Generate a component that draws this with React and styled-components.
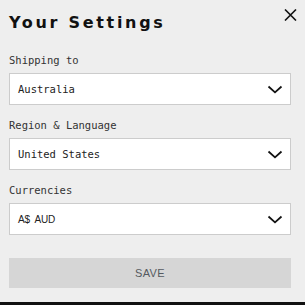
import React from "react";
import styled, { createGlobalStyle } from "styled-components";

const Global = createGlobalStyle`
  html, body { margin: 0; padding: 0; background: #eeeeee; }
  body { font-family: "DejaVu Sans Mono", monospace; }
  *, *::before, *::after { box-sizing: border-box; }
`;

const Panel = styled.div`
  position: relative;
  background: #eeeeee;
  padding: 0 14px 0 9px;
  width: 305px;
`;

const Header = styled.div`
  height: 53px;
  display: flex;
  align-items: flex-start;
`;

const Title = styled.h1`
  margin: 12px 0 0 0;
  font-family: "DejaVu Sans", sans-serif;
  font-weight: 700;
  font-size: 16px;
  line-height: 22px;
  letter-spacing: 2.7px;
  color: #111111;
`;

const Close = styled.button`
  position: absolute;
  top: 8px;
  right: 8px;
  width: 14px;
  height: 14px;
  padding: 0;
  border: 0;
  background: transparent;
  display: flex;
  align-items: center;
  justify-content: center;
`;

const Field = styled.div`
  display: flex;
  flex-direction: column;
  margin-bottom: ${(p) => p.$gap}px;
`;

const Label = styled.div`
  font-family: "DejaVu Sans Mono", monospace;
  font-size: 10.5px;
  line-height: 14px;
  color: #333333;
  margin-bottom: 6px;
`;

const Select = styled.div`
  height: 32px;
  border: 1px solid #cccccc;
  background: #ffffff;
  display: flex;
  align-items: center;
  justify-content: space-between;
  padding: 0 7px 0 8px;
`;

const Value = styled.span`
  font-family: ${(p) =>
    p.$sans ? '"Liberation Sans", Arial, sans-serif' : '"DejaVu Sans Mono", monospace'};
  font-size: ${(p) => (p.$sans ? "10px" : "10.5px")};
  color: #222222;
  letter-spacing: ${(p) => (p.$sans ? "-0.2px" : "0")};
  white-space: pre;
`;

const SaveButton = styled.button`
  display: block;
  width: 282px;
  height: 30px;
  border: 0;
  background: #d6d6d6;
  font-family: "Liberation Sans", Arial, sans-serif;
  font-size: 11px;
  letter-spacing: 0.4px;
  color: #555a60;
  padding: 0;
  margin: 0;
`;

const Footer = styled.div`
  margin-top: 14px;
  height: 10px;
  background: #111111;
`;

const Chevron = () => (
  <svg width="16" height="9" viewBox="0 0 16 9">
    <path d="M1.5 1.5 L8 7.3 L14.5 1.5" fill="none" stroke="#111" strokeWidth="1.8" />
  </svg>
);

const fields = [
  { label: "Shipping to", value: "Australia" },
  { label: "Region & Language", value: "United States" },
  { label: "Currencies", value: "A$  AUD", sans: true },
];

export default function App() {
  return (
    <>
      <Global />
      <Panel>
        <Header>
          <Title>Your Settings</Title>
          <Close aria-label="Close">
            <svg width="13" height="12" viewBox="0 0 13 12">
              <path d="M1 0.5 L12 11.5 M12 0.5 L1 11.5" stroke="#111" strokeWidth="1.6" />
            </svg>
          </Close>
        </Header>
        {fields.map((f, i) => (
          <Field key={f.label} $gap={i === fields.length - 1 ? 23 : 13}>
            <Label>{f.label}</Label>
            <Select>
              <Value $sans={f.sans}>{f.value}</Value>
              <Chevron />
            </Select>
          </Field>
        ))}
        <SaveButton>SAVE</SaveButton>
      </Panel>
      <Footer />
    </>
  );
}
